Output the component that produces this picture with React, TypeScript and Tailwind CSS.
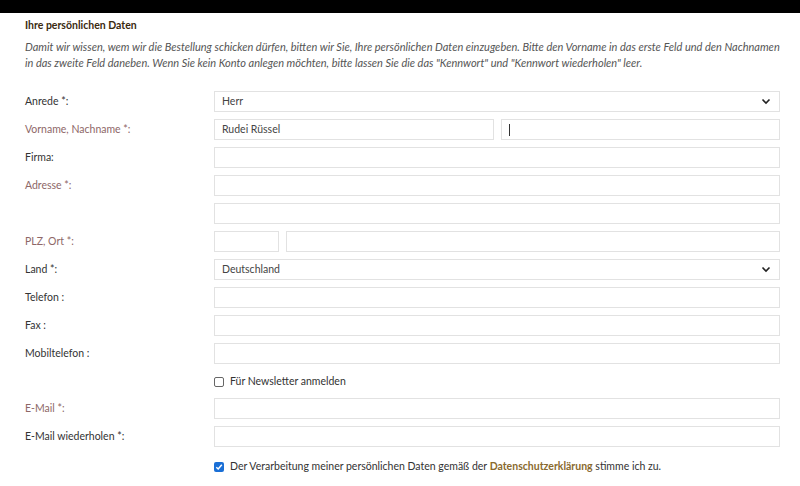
// @ts-nocheck
const font = { fontFamily: '"Lato", "Open Sans", sans-serif' };

function Label({ text, req }: { text: string; req?: boolean }) {
  return (
    <div className={`text-[10.5px] leading-[21px] ${req ? "text-[#8e6767]" : "text-[#333]"}`}>{text}</div>
  );
}

function Box({ value = "", className = "" }: { value?: string; className?: string }) {
  return (
    <div className={`h-[21px] border border-[#e2e2e2] bg-white px-[7px] text-[10.5px] leading-[19px] text-[#444] ${className}`}>
      {value}
    </div>
  );
}

function SelectBox({ value }: { value: string }) {
  return (
    <div className="flex h-[21px] items-center justify-between border border-[#e2e2e2] bg-white pl-[7px] pr-[8px] text-[10.5px] text-[#444]">
      <span>{value}</span>
      <svg width="10" height="7" viewBox="0 0 10 7" fill="none" stroke="#222" strokeWidth="1.6">
        <path d="M1.5 1.5 5 5 8.5 1.5" />
      </svg>
    </div>
  );
}

function Row({ label, req, children }: { label?: string; req?: boolean; children: any }) {
  return (
    <div className="grid grid-cols-[189px_1fr] items-start">
      {label ? <Label text={label} req={req} /> : <div />}
      <div>{children}</div>
    </div>
  );
}

export default function App() {
  return (
    <div className="min-h-[486px] w-[800px] bg-white" style={font}>
      <div className="h-[13px] bg-black" />
      <div className="pl-[25px] pr-[20px]">
        <h2 className="mt-[5px] text-[10.5px] font-bold leading-[14px] text-[#3a2a10]">Ihre persönlichen Daten</h2>
        <p className="mt-[7px] text-[11px] italic leading-[16px] text-[#555]">
          Damit wir wissen, wem wir die Bestellung schicken dürfen, bitten wir Sie, Ihre persönlichen Daten einzugeben. Bitte den Vorname in das erste Feld und den Nachnamen in das zweite Feld daneben. Wenn Sie kein Konto anlegen möchten, bitte lassen Sie die das "Kennwort" und "Kennwort wiederholen" leer.
        </p>
        <div className="mt-[20px] flex flex-col gap-[7px]">
          <Row label="Anrede *:">
            <SelectBox value="Herr" />
          </Row>
          <Row label="Vorname, Nachname *:" req>
            <div className="grid grid-cols-2 gap-[7px]">
              <Box value="Rudei Rüssel" />
              <div className="flex h-[21px] items-center border border-[#e2e2e2] bg-white px-[7px]">
                <div className="h-[12px] w-px bg-[#333]" />
              </div>
            </div>
          </Row>
          <Row label="Firma:">
            <Box />
          </Row>
          <Row label="Adresse *:" req>
            <Box />
          </Row>
          <Row>
            <Box />
          </Row>
          <Row label="PLZ, Ort *:" req>
            <div className="flex gap-[7px]">
              <Box className="w-[65px]" />
              <Box className="flex-1" />
            </div>
          </Row>
          <Row label="Land *:">
            <SelectBox value="Deutschland" />
          </Row>
          <Row label="Telefon :">
            <Box />
          </Row>
          <Row label="Fax :">
            <Box />
          </Row>
          <Row label="Mobiltelefon :">
            <Box />
          </Row>
          <Row>
            <label className="flex h-[20px] items-center gap-[6px] pt-[2px] text-[10.5px] text-[#333]">
              <span className="h-[10px] w-[10px] rounded-[2px] border border-[#666] bg-white" />
              Für Newsletter anmelden
            </label>
          </Row>
          <Row label="E-Mail *:" req>
            <Box />
          </Row>
          <Row label="E-Mail wiederholen *:">
            <Box />
          </Row>
          <Row>
            <label className="mt-[5px] flex items-center gap-[6px] text-[10.5px] text-[#333]">
              <span className="flex h-[10px] w-[10px] items-center justify-center rounded-[2px] bg-[#1a6fd6]">
                <svg width="8" height="8" viewBox="0 0 8 8" fill="none" stroke="#fff" strokeWidth="1.5">
                  <path d="M1.3 4.2 3.2 6 6.8 1.8" />
                </svg>
              </span>
              <span>
                Der Verarbeitung meiner persönlichen Daten gemäß der{" "}
                <span className="font-bold text-[#8a6a2e]">Datenschutzerklärung</span> stimme ich zu.
              </span>
            </label>
          </Row>
        </div>
      </div>
    </div>
  );
}
